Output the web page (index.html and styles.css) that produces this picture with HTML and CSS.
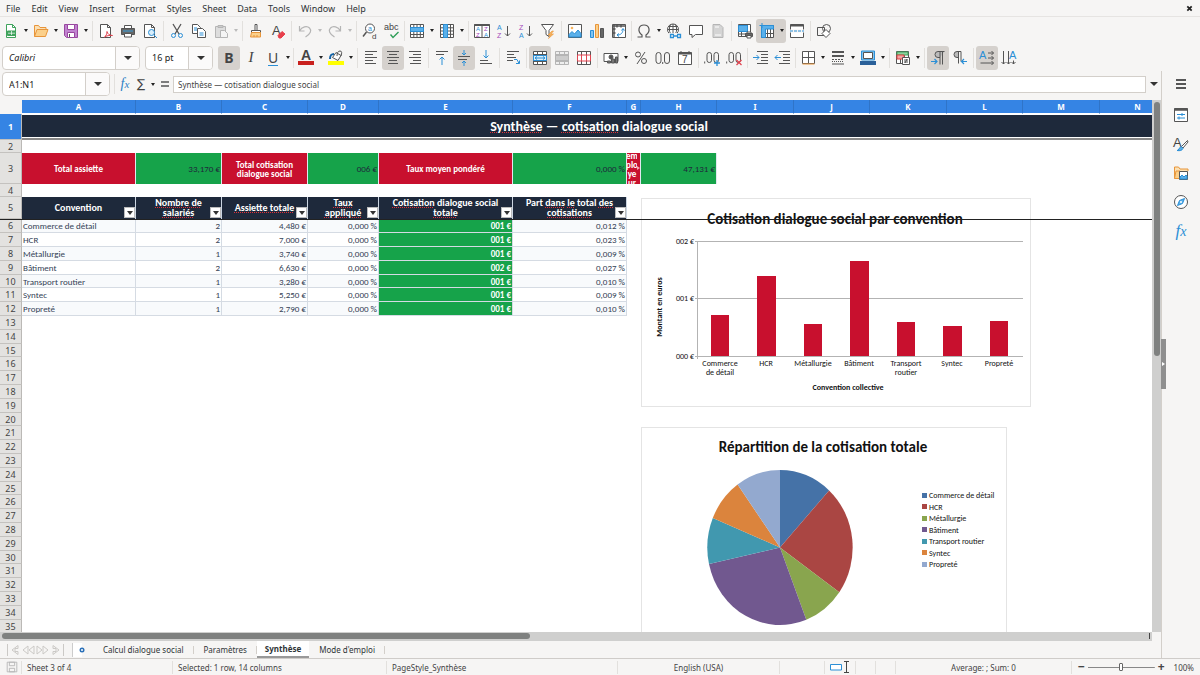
FILE: index.html
```html
<!DOCTYPE html>
<html lang="fr">
<head>
<meta charset="utf-8">
<meta name="viewport" content="width=device-width, initial-scale=1">
<title>Synthèse — cotisation dialogue social</title>
<link rel="stylesheet" href="styles.css">
</head>
<body>
<div class="app">
  <nav class="menubar" aria-label="Menu">
    <button>File</button><button>Edit</button><button>View</button><button>Insert</button><button>Format</button><button>Styles</button><button>Sheet</button><button>Data</button><button>Tools</button><button>Window</button><button>Help</button>
    <button class="close" aria-label="Close document"><svg class="x" viewBox="0 0 8 8"><path d="M1.500 1.500l5 5M6.500 1.500l-5 5"/></svg></button>
  </nav>

  <div class="toolbar" role="toolbar" aria-label="Standard">
    <button class="tb" aria-label="New"><svg class="ic" viewBox="0 0 16 16"><path class="green fw" d="M3.500 1.500h6l3 3v10h-9z"/><path class="green" d="M9.500 1.500v3h3"/><path d="M4.500 8h8v4.500h-8z" fill="#3fa35c" stroke="#3fa35c"/><path d="M5 10.200h7M8.500 8v4" stroke="#fff" stroke-width=".7"/></svg></button><button class="dd" aria-label="New options"></button>
    <button class="tb" aria-label="Open"><svg class="ic" viewBox="0 0 16 16"><path d="M1.500 13.500v-11h4l1.500 2h6v2" fill="#fbe0b3" stroke="#e8953a"/><path d="M1.500 13.500l2.500-7h11l-2.500 7z" fill="#fbd08b" stroke="#e8953a"/></svg></button><button class="dd" aria-label="Open options"></button>
    <button class="tb" aria-label="Save"><svg class="ic" viewBox="0 0 16 16"><path d="M1.500 1.500h13v13h-11l-2-2z" fill="#c183d0" stroke="#99479f"/><path d="M4.500 1.500h7v5h-7zM4.500 9.500h7v5h-7z" fill="#fff" stroke="#99479f"/><path d="M6.500 11v3" stroke="#555"/></svg></button><button class="dd" aria-label="Save options"></button>
    <span class="sep"></span>
    <button class="tb" aria-label="Export as PDF"><svg class="ic" viewBox="0 0 16 16"><path class="fw" d="M2.500 1.500h7l3 3v10h-10z"/><path d="M9.500 1.500v3h3"/><path class="red" d="M6.500 14c1.500-1 2.500-3 2.500-5.500.5 2.500 2.500 4 5.500 4-3-.5-6 .300-8 1.500z" fill="#fff"/></svg></button>
    <button class="tb" aria-label="Print"><svg class="ic" viewBox="0 0 16 16"><path class="fw" d="M4.500 5v-2.500h7v2.500"/><path d="M1.500 5.500h13v6h-13z" fill="#666"/><path d="M3 8h10" stroke="#39a0dd"/><path class="fw" d="M4.500 10.500h7v3.500h-7z"/></svg></button>
    <button class="tb" aria-label="Print preview"><svg class="ic" viewBox="0 0 16 16"><path class="fw" d="M2.500 1.500h7l3 3v10h-10z"/><path d="M9.500 1.500v3h3"/><circle class="blue" cx="9.500" cy="9.500" r="3" fill="#d9eefb"/><path class="blue" d="M12 12l3 3"/></svg></button>
    <span class="sep"></span>
    <button class="tb" aria-label="Cut"><svg class="ic" viewBox="0 0 16 16"><path d="M4 1l6 10M12 1L6 11" stroke-width="1.300"/><circle class="blue" cx="4.500" cy="12.500" r="2"/><circle class="blue" cx="11.500" cy="12.500" r="2"/></svg></button>
    <button class="tb" aria-label="Copy"><svg class="ic" viewBox="0 0 16 16"><path class="fw" d="M1.500 1.500h5l3 3v6h-8z"/><path class="fw" d="M6.500 5.500h5l3 3v6h-8z"/><path class="blue" d="M3 5h3M3 7h3M8.500 10h4M8.500 12h4"/></svg></button>
    <button class="tb" aria-label="Paste" disabled><svg class="ic mute" viewBox="0 0 16 16"><path d="M2.500 3.500h10v11h-10z" fill="#ddd"/><path d="M5 2.500h5v2h-5z" fill="#ccc"/><path d="M7.500 7.500h4l3 3v4h-7z" fill="#f4f4f4"/></svg></button><button class="dd off" aria-label="Paste options" disabled></button>
    <span class="sep"></span>
    <button class="tb" aria-label="Clone formatting"><svg class="ic" viewBox="0 0 16 16"><path class="fw" d="M7 1.500h2v6h-2zM3.500 7.500h9v2h-9z"/><path d="M3.500 9.500h9v4.500h-10z" fill="#fbd08b" stroke="#e8953a"/><path d="M6 14v-2M9 14v-2" stroke="#e8953a"/></svg></button>
    <button class="tb" aria-label="Clear formatting"><svg class="ic" viewBox="0 0 16 16"><text class="gk" x="2" y="12" font-size="13">A</text><path d="M8 12.500l4-4 3 2.500-4 4h-2z" fill="#e8404c" stroke="#e8404c"/></svg></button>
    <span class="sep"></span>
    <button class="tb" aria-label="Undo" disabled><svg class="ic mute" viewBox="0 0 16 16"><path d="M2.500 3v5h5M2.500 8C5 3.500 10 2.500 12.500 5s1 6-4 9" stroke-width="1.200"/></svg></button><button class="dd off" aria-label="Undo list" disabled></button>
    <button class="tb" aria-label="Redo" disabled><svg class="ic mute" viewBox="0 0 16 16"><path d="M13.500 3v5h-5M13.500 8C11 3.500 6 2.500 3.500 5s-1 6 4 9" stroke-width="1.200"/></svg></button><button class="dd off" aria-label="Redo list" disabled></button>
    <span class="sep"></span>
    <button class="tb" aria-label="Find and replace"><svg class="ic" viewBox="0 0 16 16"><circle class="fw" cx="8" cy="5.500" r="4.500"/><path d="M4.500 9l-3.500 4.500" stroke-width="1.500"/><text class="gb" x="6" y="8" font-size="7">a</text><text class="gk" x="10" y="15.500" font-size="8">d</text></svg></button>
    <button class="tb" aria-label="Spelling"><svg class="ic" viewBox="0 0 16 16"><text class="gk" x="0" y="7" font-size="9">abc</text><path d="M6.500 11.500l2.500 3 5.500-5.500" stroke="#2f9e58" stroke-width="1.400"/></svg></button>
    <span class="sep tight"></span>
    <button class="tb" aria-label="Row"><svg class="ic" viewBox="0 0 16 16"><path class="fw" d="M1.500 1.500h13v13h-13zM1.500 11.500h13M4.800 1.500v13M8 1.500v13M11.300 1.500v13"/><path class="blue" d="M1.500 4.500h13v4h-13z" fill="#5ab0ea"/></svg></button><button class="dd" aria-label="Row options"></button>
    <button class="tb" aria-label="Column"><svg class="ic" viewBox="0 0 16 16"><path class="fw" d="M1.500 1.500h13v13h-13zM11.500 1.500v13M1.500 4.800h13M1.500 8h13M1.500 11.300h13"/><path class="blue" d="M4.500 1.500h4v13h-4z" fill="#5ab0ea"/></svg></button><button class="dd" aria-label="Column options"></button>
    <span class="sep"></span>
    <button class="tb" aria-label="Sort"><svg class="ic" viewBox="0 0 16 16"><path class="fw" d="M.5 1.500h15v13h-15zM8 1.500v13"/><path d="M.5 2h15" stroke-width="2"/><text class="gb" x="2" y="8" font-size="6">A</text><text class="gp" x="2" y="14" font-size="6">Z</text><text class="gp" x="10" y="8" font-size="6">Z</text><text class="gb" x="10" y="14" font-size="6">A</text></svg></button>
    <button class="tb" aria-label="Sort ascending"><svg class="ic" viewBox="0 0 16 16"><text class="gb" x="1" y="7" font-size="7">A</text><text class="gp" x="1" y="15" font-size="7">Z</text><path d="M11.500 3v10M9 10.500l2.500 2.500 2.500-2.500"/></svg></button>
    <button class="tb" aria-label="Sort descending"><svg class="ic" viewBox="0 0 16 16"><text class="gp" x="1" y="7" font-size="7">Z</text><text class="gb" x="1" y="15" font-size="7">A</text><path d="M11.500 3v10M9 10.500l2.500 2.500 2.500-2.500"/></svg></button>
    <button class="tb" aria-label="AutoFilter"><svg class="ic" viewBox="0 0 16 16"><path class="fw" d="M1.500 1.500h12l-4.500 6v6l-3-2v-4z"/><path d="M12 8l-4 4h2.500l-2 3.500 5-4.500h-2.500l2.500-3z" fill="#f8b45e" stroke="#e8953a" stroke-width=".6"/></svg></button>
    <span class="sep"></span>
    <button class="tb" aria-label="Insert image"><svg class="ic" viewBox="0 0 16 16"><path class="fw" d="M1.500 1.500h13v13h-13z"/><circle cx="5" cy="5" r="1.300" fill="#f8b45e" stroke="none"/><path class="blue" d="M2 14v-2.500l3-3 2.500 2.500 3.500-4 3 3.500v3.500z" fill="#5ab0ea"/></svg></button>
    <button class="tb" aria-label="Insert chart"><svg class="ic" viewBox="0 0 16 16"><path class="blue" d="M1.500 7.500h3v7h-3z" fill="#83c4ef"/><path d="M6.500 1.500h3v13h-3z" fill="#fbd08b" stroke="#e8953a"/><path d="M11.500 5.500h3v9h-3z" fill="#666"/></svg></button>
    <button class="tb" aria-label="Insert pivot table"><svg class="ic" viewBox="0 0 16 16"><path class="fw" d="M1.500 1.500h13v13h-13z"/><path d="M1.500 3h13M3 1.500v13M6 1.500v3M10 1.500v3M1.500 6h3M1.500 10h3" stroke-width="1.400"/><path class="blue" d="M6 12c4 0 6-2 6-6M10.500 7.500l1.500-2 1.500 2M8 10.500L6 12l2 1.500"/></svg></button>
    <span class="sep tight"></span>
    <button class="tb" aria-label="Special character"><svg class="ic" viewBox="0 0 16 16"><path d="M1.500 14h4.500v-2C1 8.500 2.500 2 8 2s7 6.500 2 10v2h4.500" stroke-width="1.200"/></svg></button><button class="dd" aria-label="Symbols"></button>
    <button class="tb" aria-label="Hyperlink"><svg class="ic" viewBox="0 0 16 16"><circle class="fw" cx="7" cy="6.500" r="5.500"/><path d="M1.500 6.500h11M7 1v11M2.500 3.500h9M4.500 1.500c-1.500 3-1.500 7 0 9M9.500 1.500c1.500 3 1.500 7 0 9"/><path d="M3 10h13v6h-13z" fill="#f6f5f4" stroke="none"/><path class="blue" d="M8 14.500h-3.500v-3h3.500M11 11.500h3.500v3h-3.500M7 13h5" stroke-width="1.300"/></svg></button>
    <button class="tb" aria-label="Comment"><svg class="ic" viewBox="0 0 16 16"><path class="fw" d="M1.500 2.500h13v9h-7l-3.500 3v-3h-2.500z"/></svg></button>
    <button class="tb" aria-label="Headers and footers" disabled><svg class="ic mute" viewBox="0 0 16 16"><path d="M3 1.500h7l3 3v10h-10z" fill="#d4d4d4"/><path d="M5 4h4M5 12h6" stroke="#fff"/></svg></button>
    <span class="sep"></span>
    <button class="tb" aria-label="Print area"><svg class="ic" viewBox="0 0 16 16"><path class="fw" d="M1.500 1.500h12v12h-12zM1.500 11h12M4.500 1.500v12M10.500 1.500v12"/><path class="blue" d="M1.500 2.500h9v6h-9z" fill="#5ab0ea"/><path d="M8.500 10.500h7v3h-7z" fill="#666"/><path class="fw" d="M10 9h4v1.500h-4zM10 12.500h4v2.500h-4z"/></svg></button>
    <button class="tb on joined" aria-label="Freeze rows and columns" aria-pressed="true"><svg class="ic" viewBox="0 0 16 16"><path class="fw" d="M2.500 2.500h12v12h-12zM2.500 10.500h12M8.500 2.500v12M11.500 2.500v12"/><path class="blue" d="M2.500 2.500h12v3.500h-8v8.500h-4z" fill="#5ab0ea"/><path class="blue" d="M3 0v5M.500 2.500h5"/></svg></button><button class="dd on" aria-label="Freeze options"></button>
    <button class="tb" aria-label="Split window"><svg class="ic" viewBox="0 0 16 16"><path class="fw" d="M1.500 6.500v-5h13v5M1.500 9.500v5h13v-5"/><path d="M1.500 2.500h13" stroke-width="2"/><path class="blue" d="M1 8h14" stroke-dasharray="3 1"/></svg></button>
    <span class="sep"></span>
    <button class="tb" aria-label="Draw functions"><svg class="ic" viewBox="0 0 16 16"><path d="M1.500 4.500h7v8h-7z"/><circle cx="10.500" cy="5.500" r="4"/><path class="fw" d="M10 6.500l4 4-4 4-4-4z"/></svg></button>
  </div>

  <div class="toolbar" role="toolbar" aria-label="Formatting">
    <span class="combo font-name"><input aria-label="Font name" value="Calibri"><button aria-label="Font list"><i class="tri"></i></button></span>
    <span class="combo font-size"><input aria-label="Font size" value="16 pt"><button aria-label="Size list"><i class="tri"></i></button></span>
    <button class="tb on glyph bold" aria-pressed="true">B</button>
    <button class="tb glyph ital">I</button>
    <button class="tb glyph und"><span>U</span></button><button class="dd" aria-label="Underline options"></button>
    <span class="sep tight"></span>
    <button class="tb" aria-label="Font color"><svg class="ic" viewBox="0 0 16 16"><text class="gk" x="3" y="10" font-size="14" font-weight="700">A</text><path d="M0 11h16v4h-16z" fill="#c9211e" stroke="none"/></svg></button><button class="dd" aria-label="Font color options"></button>
    <button class="tb" aria-label="Background color"><svg class="ic" viewBox="0 0 16 16"><path class="fw" d="M8 2.500l5 3-3 5-5.500-3z"/><path d="M9 6c0-3 1-5 3-5s2 2 1 5"/><path d="M2 9c0-4 1-5 4-5" stroke="#1565a8" stroke-width="2"/><path d="M0 11h16v4h-16z" fill="#ff0" stroke="none"/></svg></button><button class="dd" aria-label="Background options"></button>
    <span class="sep"></span>
    <button class="tb" aria-label="Align left"><svg class="ic" viewBox="0 0 16 16"><path d="M2 1.500h12M2 4.500h8M2 7.500h12M2 10.500h8M2 13.500h11"/></svg></button>
    <button class="tb on" aria-label="Center" aria-pressed="true"><svg class="ic" viewBox="0 0 16 16"><path d="M2 1.500h12M4 4.500h8M2 7.500h12M4 10.500h8M3 13.500h10"/></svg></button>
    <button class="tb" aria-label="Align right"><svg class="ic" viewBox="0 0 16 16"><path d="M2 1.500h12M6 4.500h8M2 7.500h12M6 10.500h8M3 13.500h11"/></svg></button>
    <span class="sep"></span>
    <button class="tb" aria-label="Align top"><svg class="ic" viewBox="0 0 16 16"><path d="M2 1.500h12M2 4.500h8"/><path class="blue" d="M8 15v-8M5.500 9.500l2.500-2.500 2.500 2.500"/></svg></button>
    <button class="tb on" aria-label="Center vertically" aria-pressed="true"><svg class="ic" viewBox="0 0 16 16"><path d="M2 6.500h12M2 9.500h9"/><path class="blue" d="M8 0v5M6 3l2 2 2-2M8 16v-5M6 13l2-2 2 2"/></svg></button>
    <button class="tb" aria-label="Align bottom"><svg class="ic" viewBox="0 0 16 16"><path d="M2 10.500h8M2 13.500h12"/><path class="blue" d="M8 0v8M5.500 5.500l2.500 2.500 2.500-2.500"/></svg></button>
    <span class="sep"></span>
    <button class="tb" aria-label="Wrap text"><svg class="ic" viewBox="0 0 16 16"><path d="M2 1.500h12M2 4.500h7M2 7.500h9M2 10.500h6"/><path class="blue" d="M9 9.500h3l2 4M11 13.500h3.500v-3"/></svg></button>
    <span class="sep"></span>
    <button class="tb on" aria-label="Merge and center" aria-pressed="true"><svg class="ic" viewBox="0 0 16 16"><path class="fw" d="M1.500 1.500h13v13h-13zM1.500 4.500h13M1.500 11.500h13M5.500 1.500v3M10.500 1.500v3M5.500 11.500v3M10.500 11.500v3"/><path class="blue" d="M1.500 5.500h13v5h-13z" fill="#d9eefb"/><path class="blue" d="M3 8h10M5 6.500l-2 1.500 2 1.500M11 6.500l2 1.500-2 1.500"/></svg></button>
    <button class="tb" aria-label="Merge cells" disabled><svg class="ic mute" viewBox="0 0 16 16"><path d="M1.500 1.500h13v13h-13zM5.500 1.500v13M10.500 1.500v13M1.500 4.500h13M1.500 11.500h13" fill="#eee"/><path d="M1.500 5.500h13v5h-13z" fill="#ccc"/></svg></button>
    <button class="tb" aria-label="Unmerge cells"><svg class="ic" viewBox="0 0 16 16"><path class="fw" d="M1.500 1.500h13v13h-13zM5.500 1.500v13M10.500 1.500v13"/><path class="red" d="M1.500 5h13v6h-13zM5.500 5v6M10.500 5v6" fill="#fff"/></svg></button>
    <span class="sep"></span>
    <button class="tb" aria-label="Currency"><svg class="ic" viewBox="0 0 16 16"><path class="fw" d="M1 3.500h14v8h-14z"/><circle cx="8" cy="7" r="2" fill="#555"/><path d="M8.500 9h3v4h-3zM12.500 7h2v6h-2zM4.500 11h3v2h-3z" fill="#777"/></svg></button><button class="dd" aria-label="Currency options"></button>
    <button class="tb" aria-label="Percent"><svg class="ic" viewBox="0 0 16 16"><circle cx="5" cy="4.500" r="2.500"/><circle cx="11" cy="11" r="2.500"/><path d="M12 2L4 14"/></svg></button>
    <button class="tb" aria-label="Number"><svg class="ic" viewBox="0 0 16 16"><rect x="1" y="2.500" width="5" height="11" rx="2.500"/><rect x="9.500" y="2.500" width="5" height="11" rx="2.500"/><path d="M7.700 12v2"/></svg></button>
    <button class="tb" aria-label="Date"><svg class="ic" viewBox="0 0 16 16"><path class="fw" d="M1.500 2.500h13v12h-13z"/><path d="M1.500 3.500h13" stroke-width="2"/><path d="M4 1v3M12 1v3"/><text class="gk" x="5" y="13" font-size="10">7</text></svg></button>
    <span class="sep"></span>
    <button class="tb" aria-label="Add decimal place"><svg class="ic" viewBox="0 0 16 16"><rect x="3" y="2.500" width="4.500" height="10" rx="2.200"/><rect x="10" y="2.500" width="4.500" height="10" rx="2.200"/><path d="M.7 11.500v2"/><path class="blue" d="M13 10v6M10 13h6" stroke-width="1.300"/></svg></button>
    <button class="tb" aria-label="Delete decimal place"><svg class="ic" viewBox="0 0 16 16"><rect x="3" y="2.500" width="4.500" height="10" rx="2.200"/><rect x="10" y="2.500" width="4.500" height="10" rx="2.200"/><path d="M.7 11.500v2"/><path class="red" d="M10.500 10l5 5M15.500 10l-5 5" stroke-width="1.300"/></svg></button>
    <span class="sep"></span>
    <button class="tb" aria-label="Increase indent"><svg class="ic" viewBox="0 0 16 16"><path d="M4 1.500h11M8 4.500h7M8 7.500h7M8 10.500h7M4 13.500h11"/><path class="blue" d="M0 7.500h6M3.500 5l2.500 2.500-2.500 2.500"/></svg></button>
    <button class="tb" aria-label="Decrease indent"><svg class="ic" viewBox="0 0 16 16"><path d="M4 1.500h11M8 4.500h7M8 7.500h7M8 10.500h7M4 13.500h11"/><path class="blue" d="M0 7.500h6M2.500 5l-2.500 2.500 2.500 2.500"/></svg></button>
    <span class="sep tight"></span>
    <button class="tb" aria-label="Borders"><svg class="ic" viewBox="0 0 16 16"><path class="fw" d="M2.500 1.500h12v12h-12zM8.500 1.500v12M2.500 7.500h12"/><path d="M2.500 14h12" stroke="#e8953a"/></svg></button><button class="dd" aria-label="Border options"></button>
    <button class="tb" aria-label="Border style"><svg class="ic" viewBox="0 0 16 16"><path d="M2 2h12M2 6h12" stroke-width="2"/><path d="M2 9.500h12" stroke-dasharray="2 1"/><path d="M2 11.500h12" stroke-dasharray="1 1"/><path d="M2 14h12"/></svg></button><button class="dd" aria-label="Style options"></button>
    <button class="tb" aria-label="Border color"><svg class="ic" viewBox="0 0 16 16"><path class="blue" d="M1.500 1h13v9h-13z" fill="#83c4ef"/><path class="fw" d="M3.500 2.500h9v6h-9z"/><path d="M0 11h16v4h-16z" fill="#2a6099" stroke="none"/></svg></button><button class="dd" aria-label="Border color options"></button>
    <span class="sep"></span>
    <button class="tb" aria-label="Conditional formatting"><svg class="ic" viewBox="0 0 16 16"><path class="fw" d="M1.500 1.500h12v12h-12zM1.500 7.500h12M5.500 1.500v12M9.500 1.500v12"/><path d="M2 2h11v3h-11z" fill="#8fd19e" stroke="#3fa35c"/><path d="M2 5h7v4h-7z" fill="#f3a3a3" stroke="#d44"/><path class="fw" d="M7.500 7.500h7v7h-7z"/><path d="M9 10h4M9 12h4M12 9l-2 4"/></svg></button><button class="dd" aria-label="Conditional options"></button>
    <span class="sep"></span>
    <button class="tb on" aria-label="Left to right" aria-pressed="true"><svg class="ic" viewBox="0 0 16 16"><path d="M14.500 1.500h-6.500a3 3 0 000 6h2" fill="#bbb"/><path d="M10 1.500v13M12.500 1.500v13"/><path class="blue" d="M1 11.500h6M4.500 9l2.500 2.500-2.500 2.500" stroke-width="1.200"/></svg></button>
    <button class="tb" aria-label="Right to left"><svg class="ic" viewBox="0 0 16 16"><path d="M8 1.500h-3a3 3 0 000 6h1.500v-6" fill="#bbb"/><path d="M6.500 1.500v12M9 1.500v10M6.500 1.500h2.500"/><path class="blue" d="M15 11.500h-5M12 9l-2.500 2.500 2.500 2.500" stroke-width="1.200"/></svg></button>
    <span class="sep"></span>
    <button class="tb on" aria-label="Text direction left to right" aria-pressed="true"><svg class="ic" viewBox="0 0 16 16"><text class="gb" x="0" y="9" font-size="11">A</text><path d="M9 3h5.500M12.500 1l2 2-2 2M9 8h5.500M12.500 6l2 2-2 2M1.500 13h13M12.500 11l2 2-2 2"/></svg></button>
    <button class="tb" aria-label="Text direction top to bottom"><svg class="ic" viewBox="0 0 16 16"><text class="gb" x="8" y="9" font-size="11">A</text><path d="M2.500 1v13M.500 12l2 2 2-2M7.500 1v13M5.500 12l2 2 2-2M12.500 10.500v3.500M10.500 12l2 2 2-2"/></svg></button>
  </div>

  <div class="body">
    <main class="work">
      <div class="formula-bar">
        <span class="combo name-box"><input aria-label="Name box" value="A1:N1"><button aria-label="Named ranges"><i class="tri"></i></button></span>
        <span class="sep"></span>
        <button class="fb" aria-label="Function wizard"><span class="fx">f<small>x</small></span></button>
        <button class="fb sigma" aria-label="Select function">∑</button><button class="dd" aria-label="Function options"></button>
        <button class="fb" aria-label="Formula"><svg class="ic" viewBox="0 0 16 16"><path d="M4 6h8M4 10h8" stroke-width="1.500"/></svg></button>
        <input class="formula" aria-label="Input line" value="Synthèse — cotisation dialogue social">
        <button class="expand" aria-label="Expand formula bar"><i class="tri"></i></button>
      </div>

      <div class="grid-area">
        <div class="sheet">
          <table>
            <colgroup><col class="w-row"><col class="w-a"><col class="w-b"><col class="w-b"><col class="w-d"><col class="w-e"><col class="w-a"><col class="w-g"><col class="w-h"><col class="w-i"><col class="w-h"><col class="w-i"><col class="w-h"><col class="w-i"><col class="w-h"></colgroup>
            <thead>
              <tr class="cols"><td></td><th>A</th><th>B</th><th>C</th><th>D</th><th>E</th><th>F</th><th>G</th><th>H</th><th>I</th><th>J</th><th>K</th><th>L</th><th>M</th><th>N</th></tr>
            </thead>
            <tbody class="top">
              <tr class="r1"><th class="sel">1</th><td class="title" colspan="14"><u>Synthèse</u> — <u>cotisation</u> dialogue social</td></tr>
              <tr class="r2"><th>2</th></tr>
              <tr class="r3"><th>3</th><td class="kpi">Total assiette</td><td class="val">33,170 €</td><td class="kpi">Total cotisation dialogue social</td><td class="val">006 €</td><td class="kpi">Taux moyen pondéré</td><td class="val">0,000 %</td><td class="kpi over"><div>em<br>plo<br>ye<br>ur</div></td><td class="val">47,131 €</td></tr>
              <tr class="r2"><th>4</th></tr>
              <tr class="r5"><th>5</th><td>Convention<button class="flt" aria-label="Filter Convention"></button></td><td><u>Nombre de salariés</u><button class="flt" aria-label="Filter Nombre de salariés"></button></td><td><u>Assiette totale</u><button class="flt" aria-label="Filter Assiette totale"></button></td><td><u>Taux<br>appliqué</u><button class="flt" aria-label="Filter Taux appliqué"></button></td><td><u>Cotisation</u> dialogue social<br><u>totale</u><button class="flt" aria-label="Filter Cotisation"></button></td><td>Part <u>dans</u> <u>le</u> total <u>des</u><br><u>cotisations</u><button class="flt" aria-label="Filter Part"></button></td></tr>
            </tbody>
            <tbody class="data">
              <tr><th>6</th><td>Commerce de détail</td><td>2</td><td>4,480 €</td><td>0,000 %</td><td>001 €</td><td>0,012 %</td></tr>
              <tr><th>7</th><td>HCR</td><td>2</td><td>7,000 €</td><td>0,000 %</td><td>001 €</td><td>0,023 %</td></tr>
              <tr><th>8</th><td>Métallurgie</td><td>1</td><td>3,740 €</td><td>0,000 %</td><td>001 €</td><td>0,009 %</td></tr>
              <tr><th>9</th><td>Bâtiment</td><td>2</td><td>6,630 €</td><td>0,000 %</td><td>002 €</td><td>0,027 %</td></tr>
              <tr><th>10</th><td>Transport routier</td><td>1</td><td>3,280 €</td><td>0,000 %</td><td>001 €</td><td>0,010 %</td></tr>
              <tr><th>11</th><td>Syntec</td><td>1</td><td>5,250 €</td><td>0,000 %</td><td>001 €</td><td>0,009 %</td></tr>
              <tr><th>12</th><td>Propreté</td><td>1</td><td>2,790 €</td><td>0,000 %</td><td>001 €</td><td>0,010 %</td></tr>
              <tr><th>13</th></tr><tr><th>14</th></tr><tr><th>15</th></tr><tr><th>16</th></tr><tr><th>17</th></tr><tr><th>18</th></tr><tr><th>19</th></tr><tr><th>20</th></tr><tr><th>21</th></tr><tr><th>22</th></tr><tr><th>23</th></tr><tr><th>24</th></tr><tr><th>25</th></tr><tr><th>26</th></tr><tr><th>27</th></tr><tr><th>28</th></tr><tr><th>29</th></tr><tr><th>30</th></tr><tr><th>31</th></tr><tr><th>32</th></tr><tr><th>33</th></tr><tr><th>34</th></tr><tr><th>35</th></tr>
            </tbody>
          </table>

          <svg class="chart bars" viewBox="0 0 390 209" role="img" aria-label="Cotisation dialogue social par convention">
            <rect class="frame" x=".5" y=".5" width="389" height="208"/>
            <text class="ct" x="194" y="26">Cotisation dialogue social par convention</text>
            <path class="axis" d="M54 43.500h328M54 100.500h328M54 158.500h328M56.500 43v118"/>
            <g fill="#c8102e"><path d="M70 117h18v41h-18zM116 78h19v80h-19zM163 126h18v32h-18zM209 63h19v95h-19zM256 124h18v34h-18zM302 128h19v30h-19zM349 123h18v35h-18z"/></g>
            <g class="end"><text x="53" y="46">002 €</text><text x="53" y="103">001 €</text><text x="53" y="161">000 €</text></g>
            <g class="mid"><text x="79" y="168">Commerce</text><text x="79" y="177">de détail</text><text x="125" y="168">HCR</text><text x="172" y="168">Métallurgie</text><text x="218" y="168">Bâtiment</text><text x="265" y="168">Transport</text><text x="265" y="177">routier</text><text x="311" y="168">Syntec</text><text x="358" y="168">Propreté</text>
            <text class="b" x="207" y="192">Convention collective</text><text class="b" x="0" y="0" transform="translate(21 109) rotate(-90)">Montant en euros</text></g>
          </svg>

          <svg class="chart pie" viewBox="0 0 366 220" role="img" aria-label="Répartition de la cotisation totale">
            <rect class="frame" x=".5" y=".5" width="365" height="240"/>
            <text class="ct" x="182" y="25">Répartition de la cotisation totale</text>
            <path fill="#4572a7" d="M139 120.500V43A72.700 77.500 0 01188.100 63.400z"/>
            <path fill="#aa4643" d="M139 120.500L188.100 63.400A72.700 77.500 0 01198.300 165.300z"/>
            <path fill="#89a54e" d="M139 120.500L198.300 165.300A72.700 77.500 0 01165.300 192.800z"/>
            <path fill="#71588f" d="M139 120.500L165.300 192.800A72.700 77.500 0 0168 137.100z"/>
            <path fill="#4198af" d="M139 120.500L68 137.100A72.700 77.500 0 0171.800 91z"/>
            <path fill="#db843d" d="M139 120.500L71.800 91A72.700 77.500 0 0196.600 57.600z"/>
            <path fill="#93a9cf" d="M139 120.500L96.600 57.600A72.700 77.500 0 01139 43z"/>
            <rect x="281" y="66" width="5" height="5" fill="#4572a7"/><rect x="281" y="77" width="5" height="5" fill="#aa4643"/><rect x="281" y="89" width="5" height="5" fill="#89a54e"/><rect x="281" y="100" width="5" height="5" fill="#71588f"/><rect x="281" y="112" width="5" height="5" fill="#4198af"/><rect x="281" y="123" width="5" height="5" fill="#db843d"/><rect x="281" y="135" width="5" height="5" fill="#93a9cf"/>
            <g><text x="288" y="71">Commerce de détail</text><text x="288" y="83">HCR</text><text x="288" y="94">Métallurgie</text><text x="288" y="106">Bâtiment</text><text x="288" y="117">Transport routier</text><text x="288" y="129">Syntec</text><text x="288" y="140">Propreté</text></g>
          </svg>
          <div class="freeze"></div>
        </div>
        <div class="vscroll"><i></i></div>
      </div>
      <div class="hscroll"><i></i></div>

      <div class="tabs">
        <div class="tabnav">
          <button aria-label="First sheet"><svg viewBox="0 0 14 12"><path d="M1.500 0v12M12 1.500L6 6l6 4.500v-3h-3v-3h3z"/></svg></button><button aria-label="Previous sheet"><svg viewBox="0 0 14 12"><path d="M7 2L2 6l5 4zM13 2L8 6l5 4z"/></svg></button><button aria-label="Next sheet"><svg viewBox="0 0 14 12"><path d="M1 2l5 4-5 4zM7 2l5 4-5 4z"/></svg></button><button aria-label="Last sheet"><svg viewBox="0 0 14 12"><path d="M12.500 0v12M2 1.500L8 6l-6 4.500v-3h3v-3h-3z"/></svg></button>
        </div>
        <button class="addtab" aria-label="Add sheet"><svg viewBox="0 0 14 16"><path d="M0 1h10v14h-10z" fill="#fff"/><path d="M.500 1v14" stroke="#ccc"/><circle cx="10" cy="8" r="2.500" fill="#2a70b8"/><path d="M9 8h2M10 7v2" stroke="#fff"/></svg></button>
        <button class="tab">Calcul dialogue social</button><button class="tab">Paramètres</button><button class="tab cur">Synthèse</button><button class="tab">Mode d'emploi</button>
      </div>
    </main>

    <aside class="sidebar">
      <button class="sb first" aria-label="Sidebar settings"><svg class="ic" viewBox="0 0 16 16"><path d="M3 4h10M3 8h10M3 12h10" stroke="#222" stroke-width="1.500"/></svg></button>
      <button class="sb" aria-label="Properties"><svg class="ic" viewBox="0 0 16 16"><path class="fw" d="M1.500 1.500h13v13h-13z"/><path d="M1.500 2.500h13" stroke-width="2.500"/><path class="blue" d="M4 7.500h8M4 11h8M9 6v3M6 9.500v3"/></svg></button>
      <button class="sb" aria-label="Styles"><svg class="ic" viewBox="0 0 16 16"><text class="gk" x="0" y="11" font-size="13">A</text><path class="fw" d="M14.500 4.500l-6 6 1.500 1.500 5-6z"/><path class="blue" d="M4 14.500c2 0 2-3 4-4l2 2c-1 2-3 2.500-6 2z" fill="#5ab0ea"/></svg></button>
      <button class="sb" aria-label="Gallery"><svg class="ic" viewBox="0 0 16 16"><path d="M1.500 13.500v-11.500h4l1.500 2h8v2" fill="#fbe0b3" stroke="#e8953a"/><path d="M1.500 13.500l1.500-7.500h4v7.500z" fill="#fbd08b" stroke="#e8953a"/><path class="fw" d="M6.500 6.500h8v8h-8z"/><path class="blue" d="M7 14v-2l2-2 2 2 2-2 1 1v3z" fill="#5ab0ea"/></svg></button>
      <button class="sb" aria-label="Navigator"><svg class="ic" viewBox="0 0 16 16"><circle class="fw" cx="8" cy="8" r="6.500"/><path class="blue" d="M11.500 4.500l-2 5-5 2 2-5z" fill="#5ab0ea"/><circle cx="8" cy="8" r="1" fill="#fff" stroke="none"/></svg></button>
      <button class="sb" aria-label="Functions"><span class="fx big">f<small>x</small></span></button>
      <button class="handle" aria-label="Hide sidebar"></button>
    </aside>
  </div>

  <footer class="status">
    <span class="cell-icon"><svg class="ic mute" viewBox="0 0 16 16"><path d="M2.500 2.500h11v11h-11zM5 2.500h6v4h-6zM5 9.500h6v4h-6z"/></svg></span>
    <span>Sheet 3 of 4</span>
    <span>Selected: 1 row, 14 columns</span>
    <span>PageStyle_Synthèse</span>
    <span class="c">English (USA)</span>
    <span></span>
    <span class="c"><svg class="mode" viewBox="0 0 20 12"><path class="blue" d="M.500 3.500h11v5.500h-11z" fill="#fff"/><path d="M14 .500h5M14 11.500h5M16.500 .500v11" stroke="#444"/></svg></span>
    <span></span><span></span>
    <span class="c">Average: ; Sum: 0</span>
    <span class="zoom"><button aria-label="Zoom out">−</button><input type="range" min="0" max="100" value="50" aria-label="Zoom"><button aria-label="Zoom in">+</button><span>100%</span></span>
  </footer>
</div>
</body>
</html>
```
FILE: styles.css
```css
* { box-sizing: border-box; }
body { margin: 0; background: #f6f5f4; color: #2e3436; font-family: "Noto Sans", sans-serif; font-size: 8px; }
button, input { font: inherit; color: inherit; margin: 0; padding: 0; border: 0; background: none; }
button { display: inline-flex; align-items: center; justify-content: center; flex: none; }
svg { display: block; flex: none; }
.app { height: 100vh; display: flex; flex-direction: column; overflow: hidden; }

/* Menu */
.menubar { display: flex; align-items: center; height: 17px; flex: none; gap: 11px; padding: 0 7px 0 6px; font-size: 9px; border-bottom: 1px solid #e6e4e2; }
.menubar .close { margin-left: auto; }
.x { width: 7px; height: 7px; fill: none; stroke: #222; stroke-width: 2; }

/* Toolbars */
.toolbar { display: flex; align-items: center; height: 27px; flex: none; overflow: hidden; }
.tb { width: 22px; height: 24px; border-radius: 3px; }
.on { background: #d5d1cd; }
.on.joined { border-radius: 3px 0 0 3px; }
.dd { width: 8px; height: 24px; }
.dd.on { border-radius: 0 3px 3px 0; }
.dd::before { content: ""; border: 2px solid transparent; border-top: 3px solid #222; border-bottom: 0; }
.dd.off::before { border-top-color: #bbb; }
.sep { width: 5px; height: 20px; flex: none; background: linear-gradient(#e2e0dd, #e2e0dd) center / 1px 100% no-repeat; }
.sep.tight { width: 3px; }
.ic { width: 16px; height: 16px; overflow: visible; fill: none; stroke: #555; stroke-width: 1; }
.ic.mute { stroke: #b5b5b5; }
.ic text { stroke: none; font-family: "Liberation Sans", sans-serif; }
.fw { fill: #fff; }
.blue { stroke: #2b8fd6; }
.red { stroke: #e04450; }
.green { stroke: #3fa35c; }
.gk { fill: #444; }
.gb { fill: #2b8fd6; }
.gp { fill: #a347ba; }
.glyph { font-size: 14px; color: #444; }
.bold { font-weight: 700; }
.ital { font-family: "Liberation Serif", serif; font-style: italic; font-size: 15px; }
.und span { line-height: 15px; border-bottom: 1px solid #2b8fd6; }

.combo { display: flex; flex: none; height: 24px; background: #fff; border: 1px solid #d3cfca; border-radius: 4px; overflow: hidden; }
.combo input { flex: 1; min-width: 0; padding-left: 6px; font-size: 9px; color: #222; }
.combo button { width: 24px; border-left: 1px solid #d3cfca; background: #fbfafa; }
.tri { border: 4px solid transparent; border-top: 4px solid #333; border-bottom: 0; }
.font-name { width: 138px; margin: 0 5px 0 2px; }
.font-name input { font-style: italic; }
.font-size { width: 68px; margin-right: 5px; }

/* Work area */
.body { flex: 1; min-height: 0; display: flex; }
.work { flex: 1; min-width: 0; display: flex; flex-direction: column; }
.formula-bar { height: 29px; padding: 1px 0 4px 2px; flex: none; display: flex; align-items: center; }
.name-box { width: 108px; margin-right: 2px; }
.fb { width: 16px; height: 20px; }
.fx { font: italic 14px/16px "Liberation Serif", serif; color: #2b7fc4; }
.fx small { font-size: 11px; }
.fx.big { font-size: 17px; color: #2b8fd6; }
.fx.big small { font-size: 14px; }
.sigma { font: 12px "DejaVu Sans", sans-serif; color: #444; }
.formula { flex: 1; min-width: 0; height: 17px; background: #fff; border: 1px solid #d3cfca; padding-left: 4px; color: #444; }
.expand { width: 15px; }

.grid-area { flex: 1; min-height: 0; display: flex; }
.sheet { flex: 1; min-width: 0; position: relative; overflow: hidden; background: #fff; }
table { table-layout: fixed; width: 0; border-collapse: separate; border-spacing: 0; font-family: Carlito, Lato, sans-serif; font-size: 9px; line-height: 9px; }
td, th { padding: 0; }
.w-row { width: 22px; } .w-a { width: 114px; } .w-b { width: 86px; } .w-d { width: 71px; } .w-e { width: 134px; }
.w-g { width: 14px; } .w-h { width: 76px; } .w-i { width: 77px; }
tbody th { background: #e3e2e0; border-right: 1px solid #bbb9b6; border-bottom: 1px solid #c4c2bf; font: 9px/11px "Noto Sans", sans-serif; color: #444; }
.cols { height: 14px; }
.cols td { background: #f6f5f4; }
.cols th { background: #3584e4; color: #fff; font: 700 8px/12px "Noto Sans", sans-serif; border-right: 1px solid #2f74c8; border-bottom: 1px solid #fff; }
.r1 { height: 26px; }
.top .sel { background: #3584e4; color: #fff; font-weight: 700; }
.title { background: #1e293b; color: #fff; font-size: 14px; font-weight: 700; line-height: 18px; text-align: center; border-top: 1px solid #fff; border-bottom: 2px solid #888; box-shadow: inset 0 -1px #fff; }
u { text-decoration: underline dotted #e0303a 1px; text-underline-offset: 1px; }
.r2 { height: 13px; }
.r3 { height: 31px; }
.kpi { background: #c8102e; color: #fff; font-weight: 700; text-align: center; border-right: 1px solid #e2e8f0; padding: 0 10px; }
.val { background: #16a34a; color: #1e293b; text-align: right; border-right: 1px solid #e2e8f0; padding-right: 1px; }
.kpi.over { padding: 0; position: relative; }
.over div { width: 10px; height: 30px; overflow: hidden; display: flex; align-items: center; justify-content: center; }
.over::after { content: ""; position: absolute; right: 0; top: 13px; border: 2px solid transparent; border-left: 3px solid #f7a8b4; border-right: 0; }
.r5 { height: 22px; }
.r5 td { position: relative; background: #1e293b; color: #fff; font-size: 10px; font-weight: 700; text-align: center; border-right: 1px solid #cbd5e1; padding: 0 10px; line-height: 10px; }
.flt { position: absolute; right: 0; bottom: 1px; width: 11px; height: 11px; background: #fff; border: 1px solid #bbb; }
.flt::before { content: ""; border: 3px solid transparent; border-top: 4px solid #333; border-bottom: 0; }
.data tr { height: 14px; }
.data tr:nth-child(5n) { height: 13px; }
.data td { color: #334155; text-align: right; padding-right: 1px; border-right: 1px solid #d5dbe3; border-bottom: 1px solid #d5dbe3; }
.data tr:nth-child(odd) td { background: #f8fafc; }
.data td:nth-child(2) { text-align: left; padding-left: 1px; }
.data tr td:nth-child(6) { background: #16a34a; color: #fff; font-weight: 700; }
.freeze { position: absolute; left: 0; right: 0; top: 119px; height: 1px; background: #222; }

/* Charts float over the cells */
.chart { position: absolute; left: 641px; background: #fff; font-family: Carlito, Lato, sans-serif; font-size: 8px; fill: #111; }
.bars { top: 98px; width: 390px; height: 209px; }
.pie { top: 327px; width: 366px; height: 220px; }
.frame { fill: none; stroke: #e4e4e4; }
.axis { stroke: #b3b3b3; }
.ct { font-size: 15px; font-weight: 700; text-anchor: middle; }
.mid { text-anchor: middle; }
.end { text-anchor: end; }
.b { font-weight: 700; }

.vscroll { width: 9px; flex: none; background: #cfcfce; padding: 2px 1px 0 2px; }
.vscroll i { display: block; height: 48%; border-radius: 3px; background: #7f8180; }
.hscroll { height: 9px; flex: none; margin-right: 9px; background: #cfcfce; padding: 1px 2px 2px; display: flex; justify-content: space-between; }
.hscroll i { height: 6px; width: 46%; border-radius: 3px; background: #7f8180; }
.hscroll::after { content: ""; width: 1px; height: 6px; background: #444; }

.sidebar { position: relative; width: 39px; flex: none; border-left: 1px solid #d3cfca; display: flex; flex-direction: column; align-items: center; padding-top: 1px; gap: 5px; }
.sb { width: 24px; height: 24px; }
.sb.first { margin-bottom: 2px; }
.handle { position: absolute; left: -1px; top: 268px; width: 5px; height: 50px; background: #8f8f8f; }
.handle::before { content: ""; border: 2px solid transparent; border-left: 3px solid #fff; border-right: 0; }

/* Sheet tabs */
.tabs { height: 17px; flex: none; display: flex; align-items: stretch; }
.tabnav { display: flex; align-items: center; padding-left: 5px; }
.tabnav button { width: 15px; }
.tabnav svg { width: 14px; height: 12px; fill: none; stroke: #cbc9c6; }
.addtab { width: 28px; }
.addtab svg { width: 14px; height: 16px; }
.tab { padding: 0 10px; background: linear-gradient(#d3cfca, #d3cfca) right / 1px 8px no-repeat; }
.tab.cur { padding: 0 8px; background: #fff; font-weight: 700; border-bottom: 2px solid #999; }

/* Status bar */
.status { height: 17px; flex: none; display: grid; grid-template-columns: 22px 151fr 214fr 231fr 162fr 45fr 31fr 20fr 20fr 176fr 128px; align-items: center; color: #444; border-top: 1px solid #cfccc9; }
.status > span { display: flex; align-items: center; height: 13px; min-width: 0; padding-left: 5px; border-right: 1px solid #e2e0dd; white-space: nowrap; }
.status > .c { justify-content: center; padding: 0; }
.status .ic { width: 14px; height: 14px; }
.status > .zoom { border: 0; gap: 2px; padding-right: 6px; }
.zoom button { font-size: 12px; line-height: 12px; width: 9px; font-weight: 700; }
.zoom > span { margin-left: 6px; }
.mode { width: 20px; height: 12px; fill: none; }
.zoom input { appearance: none; flex: 1; min-width: 0; height: 10px; background: linear-gradient(#888, #888) center / 100% 1px no-repeat; }
.zoom input::-webkit-slider-thumb { appearance: none; width: 4px; height: 8px; border: 1px solid #666; background: #fff; border-radius: 1px; }
```
